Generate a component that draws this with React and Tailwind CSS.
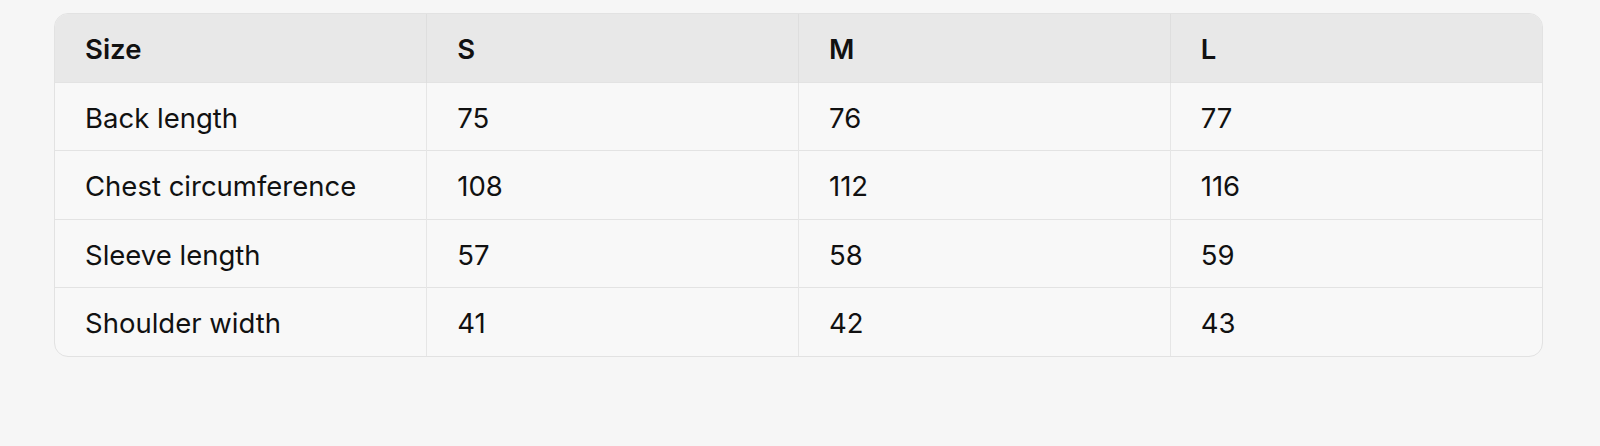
const sizes = ["S", "M", "L"];

const rows = [
  { label: "Back length", values: [75, 76, 77] },
  { label: "Chest circumference", values: [108, 112, 116] },
  { label: "Sleeve length", values: [57, 58, 59] },
  { label: "Shoulder width", values: [41, 42, 43] },
];

export default function App() {
  return (
    <div
      className="min-h-[446px] w-full bg-[#f6f6f6] pt-[13px] pl-[54px]"
      style={{ fontFamily: "Inter, 'Noto Sans', sans-serif" }}
    >
      <div className="w-[1489px] overflow-hidden rounded-[14px] border border-[#e2e2e2] bg-[#f8f8f8]">
        <table className="w-full table-fixed border-collapse text-[27.5px] text-[#111]">
          <thead>
            <tr className="h-[68px] bg-[#e8e8e8]">
              <th className="pl-[30px] pt-[4px] text-left font-semibold">Size</th>
              {sizes.map((s) => (
                <th
                  key={s}
                  className="border-l border-[#dedede] pl-[30px] pt-[4px] text-left font-semibold"
                >
                  {s}
                </th>
              ))}
            </tr>
          </thead>
          <tbody>
            {rows.map((row) => (
              <tr key={row.label} className="h-[68.5px] border-t border-[#e3e3e3]">
                <td className="pl-[30px] pt-[4px] font-normal">{row.label}</td>
                {row.values.map((v, i) => (
                  <td key={i} className="border-l border-[#e6e6e6] pl-[30px] pt-[4px]">
                    {v}
                  </td>
                ))}
              </tr>
            ))}
          </tbody>
        </table>
      </div>
    </div>
  );
}
